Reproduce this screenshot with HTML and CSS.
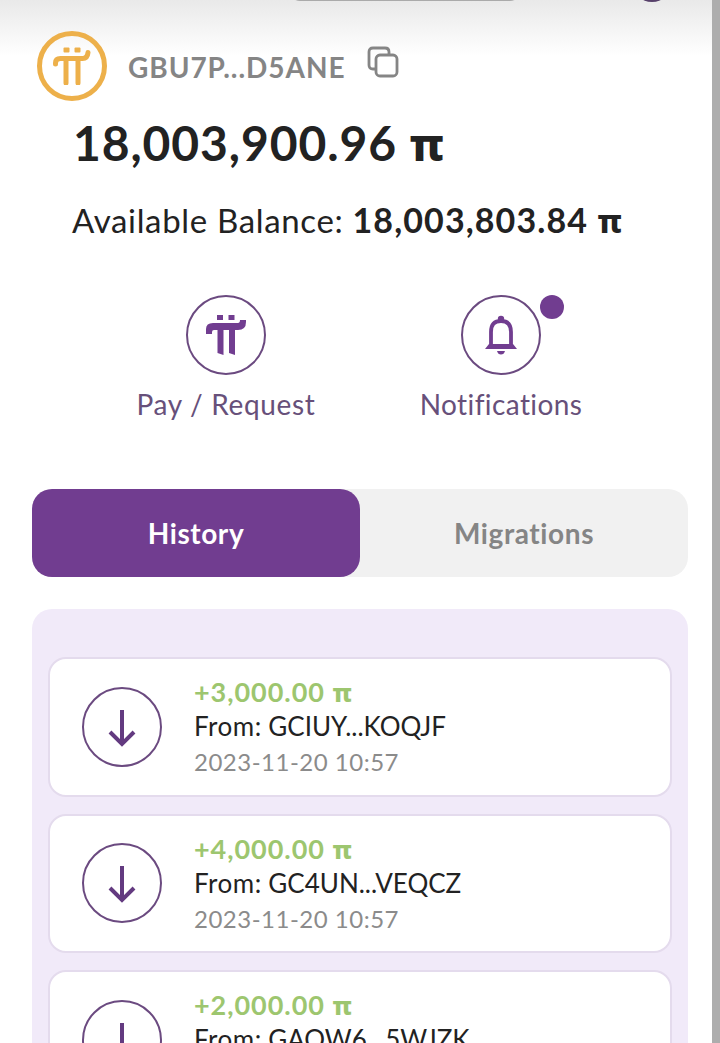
FILE: index.html
```
<!DOCTYPE html>
<html lang="en">
<head>
    <meta charset="UTF-8">
    <meta name="viewport" content="width=device-width, initial-scale=1.0">
    <title>Pi Wallet</title>
    <link rel="stylesheet" href="styles.css">
</head>

<body>
    <!-- Shared icons -->
    <svg class="icon-defs" aria-hidden="true">
        <symbol id="icon-pi" viewBox="0 0 40 40">
            <path d="M11 0h6v5h-6zM22.500 0h6v5h-6zM0 19v-5q0-6 7-6h25q2 0 2-3h6v2q0 8-8 8h-3v25l-6-2V15h-5.500v25l-6-2V15H8q-2 0-2 2v2z"/>
        </symbol>
        <symbol id="icon-down" viewBox="0 0 28 40">
            <path d="M14 1v34M2 23l12 12 12-12" fill="none" stroke="currentColor" stroke-width="4"/>
        </symbol>
    </svg>

    <div class="screen">
        <div class="top-shade">
            <div class="address-bar"></div>
            <div class="top-dot"></div>
        </div>

        <div class="account">
            <div class="logo">
                <svg class="logo-pi" viewBox="0 0 38 38">
                    <rect x="10.500" y="0.500" width="6" height="5" rx="1"/>
                    <rect x="21.500" y="0.500" width="6" height="5" rx="1"/>
                    <path d="M2.500 17v-1q0-4.500 5-4.500h22q5 0 5.500-6M13 12v24M25 12v24" fill="none" stroke="#edb04a" stroke-width="5" stroke-linecap="round"/>
                </svg>
            </div>
            <span class="address">GBU7P...D5ANE</span>
            <svg class="copy" viewBox="0 0 30 30">
                <path d="M7 22H5q-4 0-4-4V5q0-4 4-4h12q4 0 4 4v2" />
                <rect x="8" y="8" width="21" height="21" rx="4"/>
            </svg>
        </div>

        <div class="balance">18,003,900.96 <span class="pi">π</span></div>
        <div class="available"><span class="available-label">Available Balance:</span> <b>18,003,803.84 <span class="pi">π</span></b></div>

        <div class="actions">
            <a class="action">
                <span class="circle"><svg class="action-pi"><use href="#icon-pi"/></svg></span>
                <span class="action-label pay">Pay / Request</span>
            </a>
            <a class="action">
                <span class="circle">
                    <svg class="bell" viewBox="0 0 32 40">
                        <circle cx="16" cy="4" r="3.200"/>
                        <path d="M6 31V17q0-11 10-11t10 11v14" fill="none" stroke="currentColor" stroke-width="3.800"/>
                        <path d="M0 34l4-5h24l4 5zM12 36h8q-1 3.500-4 3.500t-4-3.500z"/>
                    </svg>
                    <span class="badge"></span>
                </span>
                <span class="action-label notif">Notifications</span>
            </a>
        </div>

        <div class="tabs">
            <div class="tab active">History</div>
            <div class="tab">Migrations</div>
        </div>

        <div class="history">
            <div class="entry">
                <span class="circle"><svg class="down"><use href="#icon-down"/></svg></span>
                <div class="details">
                    <div class="amount">+3,000.00 <span class="pi">π</span></div>
                    <div class="from"><span class="from-label">From:</span> GCIUY...KOQJF</div>
                    <div class="date">2023-11-20 10:57</div>
                </div>
            </div>
            <div class="entry">
                <span class="circle"><svg class="down"><use href="#icon-down"/></svg></span>
                <div class="details">
                    <div class="amount">+4,000.00 <span class="pi">π</span></div>
                    <div class="from"><span class="from-label">From:</span> GC4UN...VEQCZ</div>
                    <div class="date">2023-11-20 10:57</div>
                </div>
            </div>
            <div class="entry">
                <span class="circle"><svg class="down"><use href="#icon-down"/></svg></span>
                <div class="details">
                    <div class="amount">+2,000.00 <span class="pi">π</span></div>
                    <div class="from"><span class="from-label">From:</span> GAOW6...5WJZK</div>
                    <div class="date">2023-11-20 10:57</div>
                </div>
            </div>
        </div>
    </div>
</body>
</html>
```
FILE: styles.css
```
* {
    box-sizing: border-box;
}

body {
    font-family: Lato, 'Noto Sans', sans-serif;
    font-variant-ligatures: none;
    margin: 0;
    height: 1043px;
    overflow: hidden;
    background-color: #adadad;
    color: #222;
}

.icon-defs {
    position: absolute;
    width: 0;
    height: 0;
}

.screen {
    position: relative;
    width: 712px;
    height: 1043px;
    padding: 30px 24px 0 32px;
    background-color: #fff;
    overflow: hidden;
    white-space: nowrap;
}

/* Shadow under the browser bar */
.top-shade {
    position: absolute;
    top: 0;
    left: 0;
    width: 100%;
    height: 56px;
    background: linear-gradient(#e9e9e9, #fff);
}

.address-bar {
    position: absolute;
    top: -19px;
    left: 290px;
    width: 230px;
    height: 20px;
    border-radius: 10px;
    background-color: #aaa;
}

.top-dot {
    position: absolute;
    top: -38px;
    left: 632px;
    width: 40px;
    height: 40px;
    border-radius: 50%;
    background-color: #57406a;
}

.account {
    position: relative;
    display: flex;
    align-items: center;
    height: 71px;
    margin-bottom: 1px;
    padding-left: 5px;
}

.logo {
    display: flex;
    align-items: center;
    justify-content: center;
    width: 70px;
    height: 70px;
    border: 5.5px solid #edb04a;
    border-radius: 50%;
}

.logo-pi {
    width: 38px;
    height: 38px;
    fill: #edb04a;
}

.address {
    margin-left: 21px;
    padding-top: 2px;
    width: 218px;
    font-size: 28px;
    font-weight: 700;
    letter-spacing: 0.95px;
    color: #858585;
}

.copy {
    width: 30px;
    height: 30px;
    margin: 0 0 8px 22px;
    fill: none;
    stroke: #858585;
    stroke-width: 2.8;
    overflow: visible;
}

.balance {
    height: 82px;
    padding-left: 41px;
    font-size: 48px;
    line-height: 82px;
    font-weight: 700;
    letter-spacing: 0.9px;
}

.pi {
    font-family: 'Noto Sans', sans-serif;
    font-weight: 800;
    font-size: 0.93em;
    line-height: 1;
    letter-spacing: 0;
}

.available {
    height: 72px;
    padding-left: 40px;
    font-size: 33px;
    line-height: 72px;
    letter-spacing: 0.66px;
}

.available b {
    font-size: 34px;
    letter-spacing: 1.1px;
}

.actions {
    display: flex;
    justify-content: center;
    padding: 39px 0 0 7px;
    height: 233px;
}

.action {
    display: flex;
    flex-direction: column;
    align-items: center;
    width: 275px;
    color: #713d90;
}

.circle {
    position: relative;
    display: flex;
    flex: none;
    align-items: center;
    justify-content: center;
    width: 80px;
    height: 80px;
    border: 2px solid #6b4a80;
    border-radius: 50%;
    color: #633a80;
}

.action-pi {
    width: 40px;
    height: 40px;
    fill: #713d90;
}

.bell {
    width: 32px;
    height: 40px;
    fill: #713d90;
    color: #713d90;
}

.badge {
    position: absolute;
    top: -2px;
    right: -25px;
    width: 24px;
    height: 24px;
    border-radius: 50%;
    background-color: #713d90;
}

.action-label {
    margin-top: 11px;
    font-size: 28px;
    line-height: 36px;
    color: #67507a;
}

.pay {
    letter-spacing: 0.65px;
}

.notif {
    letter-spacing: 0.4px;
}

.tabs {
    display: flex;
    height: 88px;
    border-radius: 20px;
    background-color: #f1f1f1;
}

.tab {
    flex: 1;
    border-radius: 20px;
    font-size: 28px;
    line-height: 88px;
    font-weight: 700;
    letter-spacing: 0.6px;
    text-align: center;
    color: #858585;
}

.tab.active {
    background-color: #713d90;
    color: #fff;
}

.history {
    display: flex;
    flex-direction: column;
    gap: 17px;
    height: 500px;
    margin-top: 32px;
    padding: 48px 16px;
    border-radius: 20px;
    background-color: #f1eaf9;
}

.entry {
    display: flex;
    flex: none;
    align-items: center;
    height: 139.5px;
    padding-left: 32px;
    border: 2px solid #e4dbed;
    border-radius: 18px;
    background-color: #fff;
}

.down {
    width: 28px;
    height: 40px;
    margin-top: 4px;
}

.details {
    margin-left: 32px;
    padding-top: 1px;
}

.amount {
    font-size: 27px;
    line-height: 35px;
    font-weight: 700;
    letter-spacing: 0.95px;
    color: #9dc66f;
}

.from {
    font-size: 26px;
    line-height: 35px;
}

.from-label {
    letter-spacing: 0.5px;
}

.date {
    font-size: 24px;
    line-height: 36px;
    letter-spacing: 0.5px;
    color: #8b8b8b;
}
```
